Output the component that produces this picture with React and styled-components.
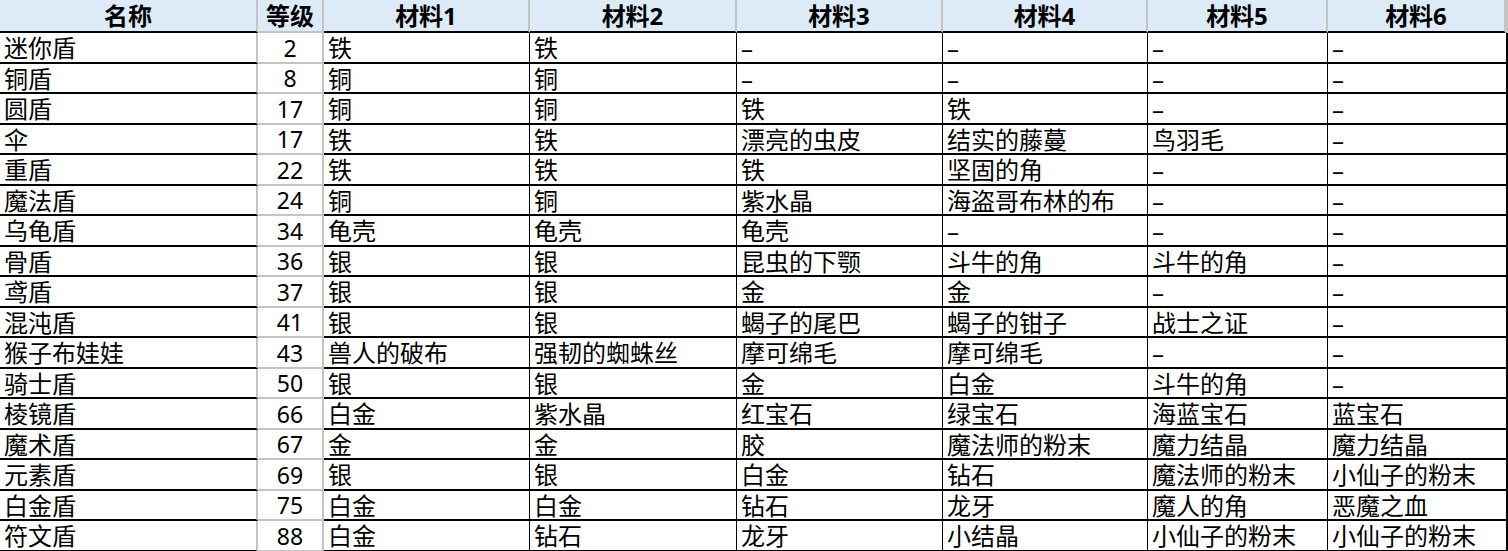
import React from 'react';
import styled, { createGlobalStyle } from 'styled-components';

const GlobalStyle = createGlobalStyle`
  html, body, #root {
    margin: 0;
    padding: 0;
    background: #ffffff;
  }
  body {
    font-family: "Noto Sans", "Noto Sans CJK SC", sans-serif;
    overflow: hidden;
  }
`;

const columns = ['名称', '等级', '材料1', '材料2', '材料3', '材料4', '材料5', '材料6'];

const rows = [
  ['迷你盾', 2, '铁', '铁', '–', '–', '–', '–'],
  ['铜盾', 8, '铜', '铜', '–', '–', '–', '–'],
  ['圆盾', 17, '铜', '铜', '铁', '铁', '–', '–'],
  ['伞', 17, '铁', '铁', '漂亮的虫皮', '结实的藤蔓', '鸟羽毛', '–'],
  ['重盾', 22, '铁', '铁', '铁', '坚固的角', '–', '–'],
  ['魔法盾', 24, '铜', '铜', '紫水晶', '海盗哥布林的布', '–', '–'],
  ['乌龟盾', 34, '龟壳', '龟壳', '龟壳', '–', '–', '–'],
  ['骨盾', 36, '银', '银', '昆虫的下颚', '斗牛的角', '斗牛的角', '–'],
  ['鸢盾', 37, '银', '银', '金', '金', '–', '–'],
  ['混沌盾', 41, '银', '银', '蝎子的尾巴', '蝎子的钳子', '战士之证', '–'],
  ['猴子布娃娃', 43, '兽人的破布', '强韧的蜘蛛丝', '摩可绵毛', '摩可绵毛', '–', '–'],
  ['骑士盾', 50, '银', '银', '金', '白金', '斗牛的角', '–'],
  ['棱镜盾', 66, '白金', '紫水晶', '红宝石', '绿宝石', '海蓝宝石', '蓝宝石'],
  ['魔术盾', 67, '金', '金', '胶', '魔法师的粉末', '魔力结晶', '魔力结晶'],
  ['元素盾', 69, '银', '银', '白金', '钻石', '魔法师的粉末', '小仙子的粉末'],
  ['白金盾', 75, '白金', '白金', '钻石', '龙牙', '魔人的角', '恶魔之血'],
  ['符文盾', 88, '白金', '钻石', '龙牙', '小结晶', '小仙子的粉末', '小仙子的粉末'],
];

const GRID = '#c4c4c4';
const LINE = '#000000';

const Sheet = styled.div`
  display: grid;
  grid-template-columns: 258px 66px 206px 207px 206px 205px 180px 178px;
  grid-template-rows: 33px;
  grid-auto-rows: 30.5px;
  width: 1506px;
  border-right: 2px solid ${GRID};
`;

const HeadCell = styled.div`
  display: flex;
  align-items: center;
  justify-content: center;
  box-sizing: border-box;
  background: #ddebf8;
  border-right: 2px solid ${GRID};
  border-bottom: 2px solid ${({ $level }) => ($level ? GRID : LINE)};
  font-size: 24px;
  font-weight: 700;
  line-height: 1;
  color: #000;
  padding-top: 1px;
`;

const NameCell = styled.div`
  display: flex;
  align-items: center;
  box-sizing: border-box;
  padding: 2px 0 0 4px;
  border-bottom: 2px solid ${LINE};
  border-right: 2px solid ${GRID};
  font-size: 24px;
  line-height: 1;
  color: #000;
  white-space: nowrap;
`;

const LevelCell = styled(NameCell)`
  justify-content: center;
  padding-left: 0;
  font-size: 23px;
  border-bottom-color: ${GRID};
`;

const MatCell = styled(NameCell)`
  padding-left: 4px;
  border-right: 1px solid ${LINE};
  margin-right: ${({ $last }) => ($last ? '-2px' : '0')};
  border-right-width: ${({ $last }) => ($last ? '2px' : '1px')};
`;

export default function App() {
  return (
    <>
      <GlobalStyle />
      <Sheet>
        {columns.map((c, i) => (
          <HeadCell key={c} $level={i === 1}>
            {c}
          </HeadCell>
        ))}
        {rows.map((r) => (
          <React.Fragment key={r[0]}>
            <NameCell>{r[0]}</NameCell>
            <LevelCell>{r[1]}</LevelCell>
            {r.slice(2).map((m, j) => (
              <MatCell key={j} $last={j === 5}>
                {m}
              </MatCell>
            ))}
          </React.Fragment>
        ))}
      </Sheet>
    </>
  );
}
